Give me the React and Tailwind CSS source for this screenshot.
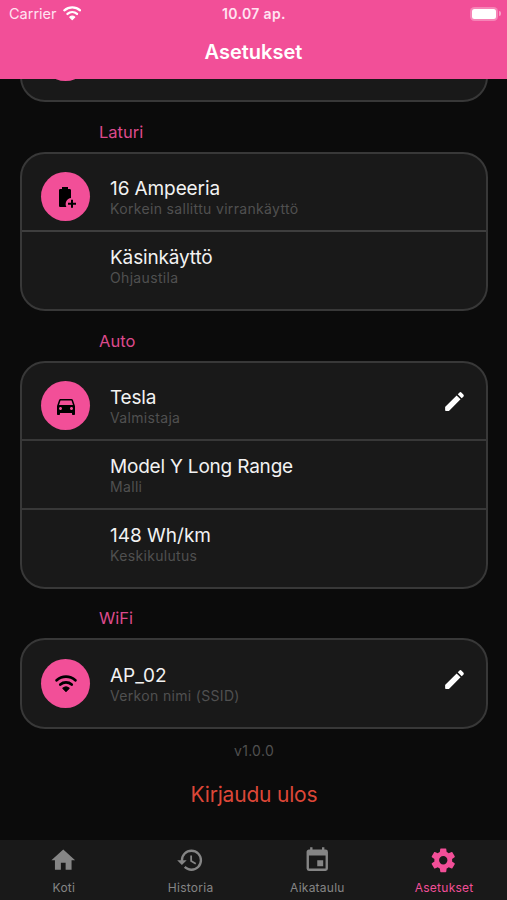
import React from "react";

const icons = {
  home: "M10 20v-6h4v6h5v-8h3L12 3 2 12h3v8z",
  history:
    "M13.5 8H12v5l4.28 2.54.72-1.21-3.5-2.08V8M13 3a9 9 0 0 0-9 9H1l3.96 4.03L9 12H6a7 7 0 0 1 7-7 7 7 0 0 1 7 7 7 7 0 0 1-7 7c-1.93 0-3.68-.79-4.94-2.06l-1.42 1.42A8.896 8.896 0 0 0 13 21a9 9 0 0 0 9-9 9 9 0 0 0-9-9",
  calendar:
    "M19 19H5V8h14m-3-7v2H8V1H6v2H5c-1.11 0-2 .89-2 2v14a2 2 0 0 0 2 2h14a2 2 0 0 0 2-2V5a2 2 0 0 0-2-2h-1V1m-1 11h-5v5h5v-5z",
  cog: "M12 15.5A3.5 3.5 0 0 1 8.5 12 3.5 3.5 0 0 1 12 8.5a3.5 3.5 0 0 1 3.5 3.5 3.5 3.5 0 0 1-3.5 3.5m7.43-2.53c.04-.32.07-.64.07-.97s-.03-.66-.07-1l2.11-1.63c.19-.15.24-.42.12-.64l-2-3.46c-.12-.22-.39-.31-.61-.22l-2.49 1c-.52-.39-1.06-.73-1.69-.98l-.37-2.65A.506.506 0 0 0 14 2h-4c-.25 0-.46.18-.5.42l-.37 2.65c-.63.25-1.17.59-1.69.98l-2.49-1c-.22-.09-.49 0-.61.22l-2 3.46c-.13.22-.07.49.12.64L4.57 11c-.04.34-.07.67-.07 1s.03.65.07.97l-2.11 1.66c-.19.15-.25.42-.12.64l2 3.46c.12.22.39.3.61.22l2.49-1.01c.52.4 1.06.74 1.69.99l.37 2.65c.04.24.25.42.5.42h4c.25 0 .46-.18.5-.42l.37-2.65c.63-.26 1.17-.59 1.69-.99l2.49 1.01c.22.08.49 0 .61-.22l2-3.46c.12-.22.07-.49-.12-.64z",
  car: "M18.92 6.01C18.72 5.42 18.16 5 17.5 5h-11c-.66 0-1.21.42-1.42 1.01L3 12v8c0 .55.45 1 1 1h1c.55 0 1-.45 1-1v-1h12v1c0 .55.45 1 1 1h1c.55 0 1-.45 1-1v-8l-2.08-5.99zM6.5 16c-.83 0-1.5-.67-1.5-1.5S5.67 13 6.5 13s1.5.67 1.5 1.5S7.33 16 6.5 16zm11 0c-.83 0-1.5-.67-1.5-1.5s.67-1.5 1.5-1.5 1.5.67 1.5 1.5-.67 1.5-1.5 1.5zM5 11l1.5-4.5h11L19 11H5z",
  battery:
    "M16.67 4H15V2H9v2H7.33C6.6 4 6 4.6 6 5.33v15.33C6 21.4 6.6 22 7.33 22h6.07A6 6 0 0 1 18 13.1V5.33C18 4.6 17.4 4 16.67 4zM18 14.7v3h-3v2h3v3h2v-3h3v-2h-3v-3z",
  pencil:
    "M3 17.46v3.04c0 .28.22.5.5.5h3.04c.13 0 .26-.05.35-.15L17.81 9.94l-3.75-3.75L3.15 17.1c-.1.1-.15.22-.15.36zM20.5 7.4a1.6 1.6 0 0 0 0-2.2l-1.7-1.7a1.6 1.6 0 0 0-2.2 0l-1.47 1.62 3.75 3.75z",
};

function Icon({ name, className }) {
  return (
    <svg viewBox="0 0 24 24" fill="currentColor" className={className}>
      <path d={icons[name]} />
    </svg>
  );
}

function Wifi({ className }) {
  return (
    <svg viewBox="0 0 24 19" fill="none" stroke="currentColor" strokeWidth="3" className={className}>
      <path d="M1.8 5.4a15.5 15.5 0 0 1 20.4 0" strokeLinecap="round" />
      <path d="M5.8 10.1a9.4 9.4 0 0 1 12.4 0" strokeLinecap="round" />
      <path d="M12 17.6l-3.3-3.4a4.9 4.9 0 0 1 6.6 0z" fill="currentColor" strokeWidth="1.4" strokeLinejoin="round" />
    </svg>
  );
}

function Row({ title, sub, titleClass = "", icon, edit, className }) {
  return (
    <div className={`flex ${className}`}>
      <div className="w-[88px] shrink-0 pl-[19px]">
        {icon && (
          <div className="mt-[18px] flex size-[49px] items-center justify-center rounded-full bg-[#f24f98] text-black">
            {icon}
          </div>
        )}
      </div>
      <div className={`flex-1 whitespace-nowrap ${icon ? "pt-[23px]" : "pt-[14px]"}`}>
        <div className={`text-[19px] leading-[24px] text-[#f2f2f2] ${titleClass}`}>{title}</div>
        <div className="-mt-px text-[14px] leading-[18px] tracking-[0.33px] text-[#505050]">{sub}</div>
      </div>
      {edit && <Icon name="pencil" className="mt-[26px] mr-[19px] size-[25px] text-white" />}
    </div>
  );
}

function Section({ label, labelClass, cardClass, children }) {
  return (
    <section>
      <h2 className={`pl-[99px] text-[16.5px] leading-[20px] text-[#dc4a8c] ${labelClass}`}>{label}</h2>
      <div
        className={`ml-[20px] w-[468px] overflow-hidden rounded-[25px] border-2 border-[#383838] bg-[#191919] ${cardClass}`}
      >
        {children}
      </div>
    </section>
  );
}

function Tab({ name, label, active }) {
  return (
    <div className={`flex flex-1 flex-col items-center pt-[6px] ${active ? "text-[#f24f98]" : "text-[#858585]"}`}>
      <Icon name={name} className="size-[28.5px]" />
      <span className="mt-[5.5px] pl-px text-[12px] leading-[16px] tracking-[0.25px]">{label}</span>
    </div>
  );
}

export default function App() {
  return (
    <div className="flex h-[900px] w-[507px] flex-col overflow-hidden bg-[#0b0b0b] font-['Inter',sans-serif]">
      <header className="h-[79px] shrink-0 bg-[#f24f98] text-white">
        <div className="grid h-[27px] grid-cols-3 items-center text-[#ffe3f1]">
          <div className="flex items-center gap-[6px] pl-[9px] text-[14.5px]">
            <span>Carrier</span>
            <Wifi className="mb-px h-[15px] w-[18.5px] text-white" />
          </div>
          <div className="pl-px text-center text-[14px] font-semibold tracking-[0.35px] whitespace-nowrap">10.07 ap.</div>
          <div className="flex items-center justify-end pr-[6px]">
            <div className="h-[14px] w-[28px] rounded-[4.5px] bg-[#f684b7] p-[2px]">
              <div className="h-full rounded-[2.5px] bg-white" />
            </div>
            <div className="ml-px h-[5px] w-[2px] rounded-r-full bg-[#f99cc6]" />
          </div>
        </div>
        <h1 className="pt-[12px] text-center text-[20px] leading-[26px] font-semibold">Asetukset</h1>
      </header>

      <main className="flex-1 overflow-hidden">
        <div className="ml-[20px] h-[23px] w-[468px] overflow-hidden">
          <div className="-mt-[67px] h-[90px] rounded-[25px] border-2 border-[#383838] bg-[#191919] pt-[18px] pl-[19px]">
            <div className="size-[49px] rounded-full bg-[#f24f98]" />
          </div>
        </div>

        <Section label="Laturi" labelClass="mt-[20px]" cardClass="mt-[10px] h-[159px]">
          <Row
            className="h-[78px] border-b-2 border-[#3e3e3e]"
            title="16 Ampeeria"
            titleClass="tracking-[-0.1px]"
            sub="Korkein sallittu virrankäyttö"
            icon={<Icon name="battery" className="mr-[2px] size-[24px]" />}
          />
          <Row className="h-[77px]" title="Käsinkäyttö" titleClass="tracking-[-0.15px]" sub="Ohjaustila" />
        </Section>

        <Section label="Auto" labelClass="mt-[20px]" cardClass="mt-[10px] h-[228px]">
          <Row
            className="h-[78px] border-b-2 border-[#383838]"
            title="Tesla"
            titleClass="tracking-[-0.2px]"
            sub="Valmistaja"
            edit
            icon={<Icon name="car" className="size-[24px]" />}
          />
          <Row
            className="h-[69px] border-b-2 border-[#383838]"
            title="Model Y Long Range"
            titleClass="tracking-[-0.2px]"
            sub="Malli"
          />
          <Row className="h-[77px]" title="148 Wh/km" sub="Keskikulutus" />
        </Section>

        <Section label="WiFi" labelClass="mt-[19px]" cardClass="mt-[10px] h-[91px]">
          <Row
            className="h-[86px] pt-px"
            title="AP_02"
            sub="Verkon nimi (SSID)"
            edit
            icon={<Wifi className="h-[18px] w-[22px]" />}
          />
        </Section>

        <p className="mt-[12px] pl-px text-center text-[14px] leading-[20px] tracking-[0.3px] text-[#505050]">v1.0.0</p>
        <p className="mt-[19px] pl-px text-center text-[21px] leading-[30px] tracking-[-0.2px] text-[#dd4738]">
          Kirjaudu ulos
        </p>
      </main>

      <nav className="flex h-[60px] shrink-0 bg-[#191919]">
        <Tab name="home" label="Koti" />
        <Tab name="history" label="Historia" />
        <Tab name="calendar" label="Aikataulu" />
        <Tab name="cog" label="Asetukset" active />
      </nav>
    </div>
  );
}
